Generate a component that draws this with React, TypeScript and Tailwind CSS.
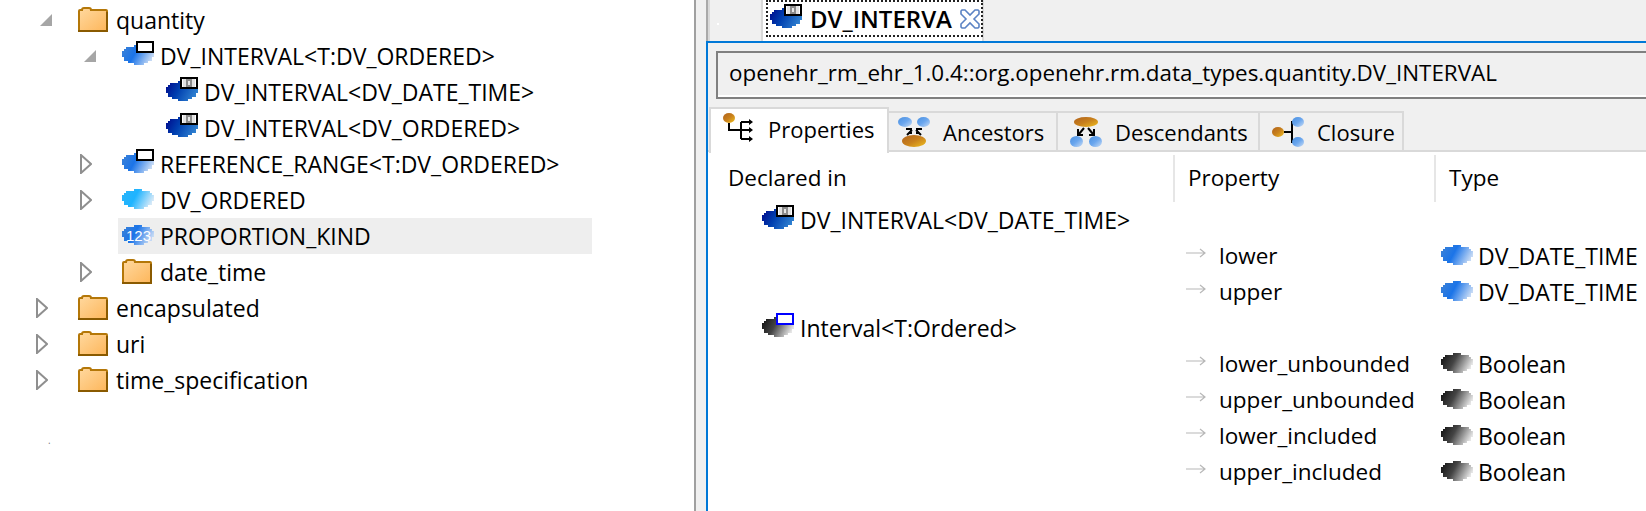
import React from 'react'

const font = "font-['Open_Sans','Noto_Sans',sans-serif]"

const cloudRows: [number, number][] = [
  [12, 20], [4, 28], [2, 30], [0, 32], [0, 32], [0, 32], [2, 30], [2, 30], [6, 26], [12, 22],
]

const palettes: Record<string, [string, string, string]> = {
  blue: ['#3d82d6', '#1b74e8', '#c6daf5'],
  pale: ['#4a90e0', '#6aa6ee', '#c8dcf5'],
  dark: ['#000a8c', '#0040b0', '#2f80d0'],
  light: ['#2ab4fa', '#1fb4ff', '#d6e9f8'],
  gray: ['#101010', '#444444', '#e6e6e6'],
  brown: ['#b0621c', '#c8801c', '#f0c020'],
}

type CloudProps = { kind: string; box?: boolean; inner?: boolean; boxColor?: string; digits?: boolean }

const Cloud = ({ kind, box, inner, boxColor = '#000', digits }: CloudProps) => {
  const [a, b, c] = palettes[kind]
  const id = `grad-${kind}`
  return (
    <svg width="32" height="24" viewBox="0 0 32 24" className="shrink-0 mb-[6px]" shapeRendering="crispEdges">
      <defs>
        <linearGradient id={id} gradientUnits="userSpaceOnUse" x1="0" y1="6" x2="28" y2="21">
          <stop offset="0" stopColor={a} />
          <stop offset="0.45" stopColor={b} />
          <stop offset="1" stopColor={c} />
        </linearGradient>
      </defs>
      {cloudRows.map(([from, to], i) => (
        <rect key={i} x={from} y={4 + i * 2} width={to - from} height="2" fill={`url(#${id})`} />
      ))}
      {box && <rect x="15" y="1" width="16" height="10" fill="#fff" stroke={boxColor} strokeWidth="2" />}
      {inner && (
        <>
          <rect x="17" y="2" width="12" height="8" fill="#e2e2e2" />
          <rect x="20" y="2" width="6" height="8" fill="#8c8c8c" />
          <rect x="22" y="4" width="2" height="4" fill="#e8e8e8" />
        </>
      )}
      {digits && (
        <text x="4" y="20" fontSize="15" fontFamily="Liberation Sans" fill="#fff" shapeRendering="auto">
          123
        </text>
      )}
    </svg>
  )
}

const InstanceCloud = () => <Cloud kind="dark" box inner />

const Folder = () => (
  <svg width="30" height="26" viewBox="0 0 30 26" className="shrink-0 mb-[3px]">
    <defs>
      <linearGradient id="folder-fill" x1="0" y1="0" x2="1" y2="1">
        <stop offset="0" stopColor="#ffd9a0" />
        <stop offset="1" stopColor="#fdb65a" />
      </linearGradient>
    </defs>
    <path d="M1 25V5q0-1 1-1h2q0-2 2-2h5q2 0 2 2h15q1 0 1 1v20z" fill="url(#folder-fill)" stroke="#b47708" strokeWidth="2" />
    <path d="M0 25h30M29 6v19" stroke="#8a5a00" strokeWidth="2" />
  </svg>
)

const TwistyOpen = () => (
  <svg width="12" height="12" viewBox="0 0 12 12" className="shrink-0">
    <path d="M12 0v12H0z" fill="#a6a6a6" />
  </svg>
)

const TwistyClosed = () => (
  <svg width="12" height="20" viewBox="0 0 12 20" className="shrink-0">
    <path d="M1 1v18l10-9z" fill="#fff" stroke="#8f8f8f" strokeWidth="2" />
  </svg>
)

const Arrow = () => (
  <svg width="20" height="10" viewBox="0 0 20 10" className="shrink-0 mb-[6px]">
    <path d="M0 5h19M14 1l5 4-5 4" fill="none" stroke="#b8b8b8" strokeWidth="1.2" />
  </svg>
)

const CloseIcon = () => (
  <svg width="20" height="20" viewBox="0 0 20 20" className="shrink-0">
    <path
      d="M2 1h3l5 5 5-5h3l1 1v3l-5 5 5 5v3l-1 1h-3l-5-5-5 5H2l-1-1v-3l5-5-5-5V2z"
      fill="#fff"
      stroke="#5b83c4"
      strokeWidth="1.6"
    />
  </svg>
)

const Dot = ({ x, y, w, h, kind }: { x: number; y: number; w: number; h: number; kind: string }) => {
  const [a, b, c] = palettes[kind]
  const id = `dot-${kind}`
  return (
    <g>
      <defs>
        <linearGradient id={id} x1="0" y1="0" x2="1" y2="1">
          <stop offset="0" stopColor={a} />
          <stop offset="0.5" stopColor={b} />
          <stop offset="1" stopColor={c} />
        </linearGradient>
      </defs>
      <ellipse cx={x + w / 2} cy={y + h / 2} rx={w / 2} ry={h / 2} fill={`url(#${id})`} />
    </g>
  )
}

const PropertiesIcon = () => (
  <svg width="32" height="30" viewBox="0 0 32 30" className="shrink-0 mb-[2px]">
    <Dot x={0} y={0} w={12} h={10} kind="brown" />
    <path d="M6 10v7h22M18 9v17M18 9h9M18 26h9" fill="none" stroke="#000" strokeWidth="2" />
    <path d="M26 6l4 3-4 3zM26 14l4 3-4 3zM26 23l4 3-4 3z" fill="#000" />
  </svg>
)

const AncestorsIcon = () => (
  <svg width="32" height="30" viewBox="0 0 32 30" className="shrink-0">
    <Dot x={0} y={0} w={14} h={10} kind="pale" />
    <Dot x={19} y={0} w={13} h={10} kind="pale" />
    <path d="M9 18l5-5M23 18l-5-5M8 12h5v5M24 12h-5v5" fill="none" stroke="#000" strokeWidth="2" />
    <Dot x={4} y={18} w={24} h={12} kind="brown" />
  </svg>
)

const DescendantsIcon = () => (
  <svg width="32" height="30" viewBox="0 0 32 30" className="shrink-0">
    <Dot x={4} y={0} w={24} h={10} kind="brown" />
    <path d="M14 11l-5 6M18 11l5 6M8 12v6h5M24 12v6h-5" fill="none" stroke="#000" strokeWidth="2" />
    <Dot x={0} y={19} w={13} h={11} kind="pale" />
    <Dot x={19} y={19} w={13} h={11} kind="pale" />
  </svg>
)

const ClosureIcon = () => (
  <svg width="32" height="30" viewBox="0 0 32 30" className="shrink-0">
    <Dot x={0} y={10} w={12} h={10} kind="brown" />
    <path d="M12 15h8M26 5h-6v20h6" fill="none" stroke="#000" strokeWidth="2" />
    <Dot x={20} y={0} w={12} h={10} kind="pale" />
    <Dot x={20} y={20} w={12} h={10} kind="pale" />
  </svg>
)

type TreeRow = { indent: string; twisty?: 'open' | 'closed'; icon: React.ReactNode; label: string; selected?: boolean }

const treeRows: TreeRow[] = [
  { indent: 'pl-[40px]', twisty: 'open', icon: <Folder />, label: 'quantity' },
  { indent: 'pl-[84px]', twisty: 'open', icon: <Cloud kind="blue" box />, label: 'DV_INTERVAL<T:DV_ORDERED>' },
  { indent: 'pl-[166px]', icon: <InstanceCloud />, label: 'DV_INTERVAL<DV_DATE_TIME>' },
  { indent: 'pl-[166px]', icon: <InstanceCloud />, label: 'DV_INTERVAL<DV_ORDERED>' },
  { indent: 'pl-[80px]', twisty: 'closed', icon: <Cloud kind="blue" box />, label: 'REFERENCE_RANGE<T:DV_ORDERED>' },
  { indent: 'pl-[80px]', twisty: 'closed', icon: <Cloud kind="light" />, label: 'DV_ORDERED' },
  { indent: 'pl-[122px]', icon: <Cloud kind="blue" digits />, label: 'PROPORTION_KIND', selected: true },
  { indent: 'pl-[80px]', twisty: 'closed', icon: <Folder />, label: 'date_time' },
  { indent: 'pl-[36px]', twisty: 'closed', icon: <Folder />, label: 'encapsulated' },
  { indent: 'pl-[36px]', twisty: 'closed', icon: <Folder />, label: 'uri' },
  { indent: 'pl-[36px]', twisty: 'closed', icon: <Folder />, label: 'time_specification' },
]

const Tree = () => (
  <div className="w-[694px] shrink-0 bg-white pt-[2px]">
    {treeRows.map((row) => (
      <div key={row.label} className={`h-[36px] w-[592px] flex items-center ${row.indent}`}>
        {row.twisty && (
          <span className={`flex items-center ${row.twisty === 'open' ? 'w-[38px]' : 'w-[42px]'}`}>
            {row.twisty === 'open' ? <TwistyOpen /> : <TwistyClosed />}
          </span>
        )}
        <span className={`flex items-center ${row.selected ? 'bg-[#eeeeee] -ml-[4px] pl-[4px] h-full grow' : ''}`}>
          <span className="w-[38px] shrink-0 flex items-center">{row.icon}</span>
          <span className="whitespace-pre">{row.label}</span>
        </span>
      </div>
    ))}
    <div className="pl-[48px] pt-[37px] leading-none text-[10px] text-[#808080]">.</div>
  </div>
)

type SubTabProps = { icon: React.ReactNode; label: string; active?: boolean; className: string }

const SubTab = ({ icon, label, active, className }: SubTabProps) => (
  <div
    className={`flex items-center gap-[13px] shrink-0 ${className} ${
      active
        ? 'h-[46px] bg-white border-t-2 border-x-2 border-[#d9d9d9] pb-[4px]'
        : 'h-[41px] border-t-2 border-r-2 border-[#d9d9d9] pb-[2px]'
    }`}
  >
    {icon}
    <span>{label}</span>
  </div>
)

type PropRow = { name: string; type: string; kind: string }

const PropertyRow = ({ row }: { row: PropRow }) => (
  <div className="h-[36px] flex items-center">
    <div className="w-[467px] shrink-0" />
    <div className="w-[261px] shrink-0 flex items-center gap-[13px] pl-[11px] text-[22.5px]">
      <Arrow />
      <span>{row.name}</span>
    </div>
    <div className="flex items-center gap-[5px] pl-[5px] whitespace-nowrap">
      <span className="mb-[1px] flex">
        <Cloud kind={row.kind} />
      </span>
      <span>{row.type}</span>
    </div>
  </div>
)

const DeclaredRow = ({ icon, label }: { icon: React.ReactNode; label: string }) => (
  <div className="h-[36px] flex items-center gap-[6px] pl-[54px]">
    {icon}
    <span>{label}</span>
  </div>
)

const Editor = () => (
  <div className="grow min-w-0 flex flex-col border-l-2 border-[#a9a9a9] ml-[10px]">
    <div className="h-[41px] flex items-stretch shrink-0">
      <div className="w-[55px] border-x-2 border-[#d9d9d9] relative">
        <span className="absolute left-[7px] top-[23px] w-[2px] h-[2px] bg-white" />
      </div>
      <div className="w-[221px] bg-white border-r-2 border-[#d9d9d9] pl-[3px]">
        <div className="w-[217px] h-[37px] flex items-center border-2 border-dotted border-[#222222] pl-[2px] font-semibold text-[24px]">
          <InstanceCloud />
          <span className="ml-[8px]">DV_INTERVA</span>
          <span className="ml-[8px]">
            <CloseIcon />
          </span>
        </div>
      </div>
    </div>
    <div className="grow flex flex-col border-t-2 border-l-2 border-[#0078d7] -ml-[2px] min-h-0">
      <div className="px-[8px] pt-[8px] shrink-0">
        <div className="h-[48px] mr-[-20px] border-2 border-[#808080] shadow-[inset_0_-2px_0_#ffffff] flex items-center pl-[11px] pb-[3px] whitespace-nowrap text-[22.4px]">
          openehr_rm_ehr_1.0.4::org.openehr.rm.data_types.quantity.DV_INTERVAL
        </div>
      </div>
      <div className="flex items-start h-[45px] mt-[8px] shrink-0 pl-[1px] relative z-10 text-[22px]">
        <SubTab active icon={<PropertiesIcon />} label="Properties" className="w-[180px] pl-[12px]" />
        <div className="flex mt-[4px]">
          <SubTab icon={<AncestorsIcon />} label="Ancestors" className="w-[169px] pl-[9px]" />
          <SubTab icon={<DescendantsIcon />} label="Descendants" className="w-[202px] pl-[12px]" />
          <SubTab icon={<ClosureIcon />} label="Closure" className="w-[144px] pl-[12px]" />
        </div>
      </div>
      <div className="grow bg-white border-t-2 border-[#d9d9d9] -mt-[2px]">
        <div className="h-[50px] flex pt-[3px] text-[22.5px]">
          <div className="w-[467px] border-r-2 border-[#e6e6e6] pl-[20px] flex items-center">Declared in</div>
          <div className="w-[261px] border-r-2 border-[#e6e6e6] pl-[13px] flex items-center">Property</div>
          <div className="pl-[13px] flex items-center">Type</div>
        </div>
        <DeclaredRow icon={<InstanceCloud />} label="DV_INTERVAL<DV_DATE_TIME>" />
        <PropertyRow row={{ name: 'lower', type: 'DV_DATE_TIME', kind: 'blue' }} />
        <PropertyRow row={{ name: 'upper', type: 'DV_DATE_TIME', kind: 'blue' }} />
        <DeclaredRow icon={<Cloud kind="gray" box boxColor="#0000ff" />} label="Interval<T:Ordered>" />
        <PropertyRow row={{ name: 'lower_unbounded', type: 'Boolean', kind: 'gray' }} />
        <PropertyRow row={{ name: 'upper_unbounded', type: 'Boolean', kind: 'gray' }} />
        <PropertyRow row={{ name: 'lower_included', type: 'Boolean', kind: 'gray' }} />
        <PropertyRow row={{ name: 'upper_included', type: 'Boolean', kind: 'gray' }} />
      </div>
    </div>
  </div>
)

export default function App() {
  return (
    <div className={`h-[511px] w-[1646px] overflow-hidden flex bg-[#f0f0f0] text-[23px] leading-none text-black ${font}`}>
      <Tree />
      <div className="w-[2px] shrink-0 bg-[#a0a0a0]" />
      <Editor />
    </div>
  )
}
